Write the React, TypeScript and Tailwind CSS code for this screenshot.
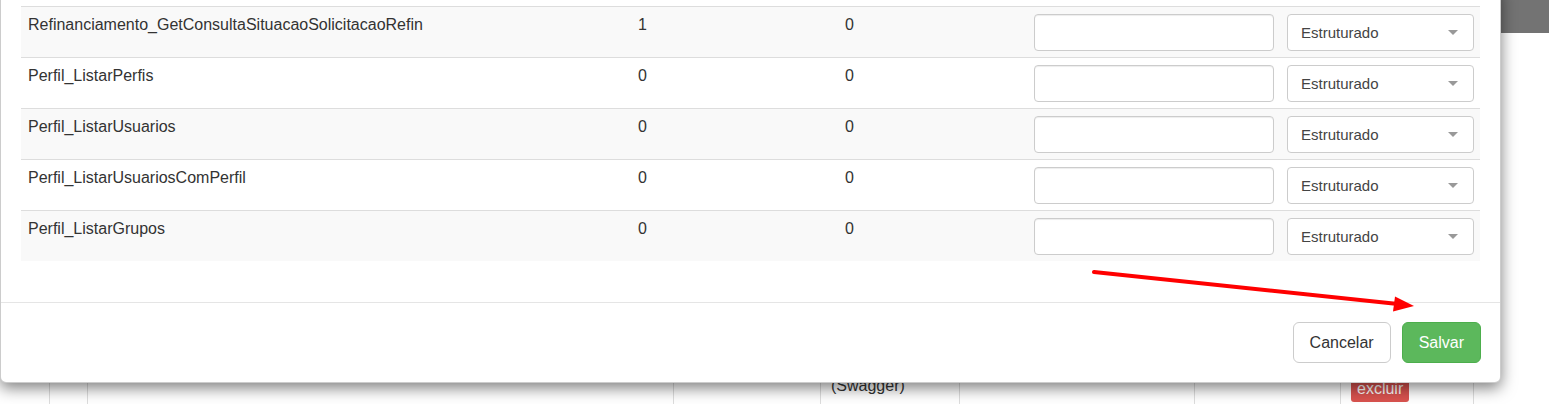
import React from "react";

const rows = [
  { name: "Refinanciamento_GetConsultaSituacaoSolicitacaoRefin", a: "1", b: "0" },
  { name: "Perfil_ListarPerfis", a: "0", b: "0" },
  { name: "Perfil_ListarUsuarios", a: "0", b: "0" },
  { name: "Perfil_ListarUsuariosComPerfil", a: "0", b: "0" },
  { name: "Perfil_ListarGrupos", a: "0", b: "0" },
];

export default function App() {
  return (
    <div
      className="relative h-[404px] w-[1549px] overflow-hidden bg-white text-[#333333]"
      style={{ fontFamily: '"Liberation Sans", Arial, sans-serif' }}
    >
      {/* page behind the modal */}
      <div className="h-[33px] w-full bg-[#737373]" />
      <div className="mt-[307px] flex h-[64px] pl-[49px]">
        <div className="w-[38px] border-l border-[#dddddd]" />
        <div className="w-[586px] border-l border-[#dddddd]" />
        <div className="w-[147px] border-l border-[#dddddd]" />
        <div className="w-[139px] border-l border-[#dddddd] pl-[10px] pt-[37px] text-[16px] leading-[18px] text-[#333333]">
          (Swagger)
        </div>
        <div className="w-[235px] border-l border-[#dddddd]" />
        <div className="w-[146px] border-l border-[#dddddd]" />
        <div className="w-[133px] border-l border-[#dddddd] pl-[10px] pt-[36px]">
          <span className="inline-block rounded-[3px] bg-[#d9534f] px-[6px] py-[3px] text-[16px] leading-[20px] text-white">
            excluir
          </span>
        </div>
        <div className="flex-1 border-l border-[#dddddd]" />
      </div>

      {/* modal */}
      <div className="absolute left-0 top-[-14px] w-[1501px] rounded-[6px] border border-black/20 bg-white shadow-[0_5px_15px_rgba(0,0,0,0.5)]">
        <div className="px-[20px] pt-[19px] pb-[21px]">
          <div className="mb-[20px] w-full">
            {rows.map((r, i) => (
              <div
                key={r.name}
                className={`flex h-[51px] border-t border-[#dddddd] text-[16px] leading-[20px] ${
                  i % 2 === 0 ? "bg-[#f9f9f9]" : "bg-white"
                }`}
              >
                <div className="w-[609px] px-[7px] pt-[8px]">{r.name}</div>
                <div className="w-[207px] px-[8px] pt-[8px]">{r.a}</div>
                <div className="w-[189px] px-[8px] pt-[8px]">{r.b}</div>
                <div className="w-[261px] pl-[8px] pt-[7px]">
                  <div className="h-[37px] w-[240px] rounded-[4px] border border-[#cccccc] bg-white shadow-[inset_0_1px_1px_rgba(0,0,0,0.075)]" />
                </div>
                <div className="flex-1 pt-[7px]">
                  <div className="flex h-[37px] w-[187px] items-center justify-between rounded-[4px] border border-[#cccccc] bg-white pl-[13px] pr-[15px] text-[15px] text-[#444444]">
                    <span>Estruturado</span>
                    <span className="h-0 w-0 border-x-[5px] border-t-[5px] border-x-transparent border-t-[#999999]" />
                  </div>
                </div>
              </div>
            ))}
          </div>
        </div>
        <div className="flex justify-end gap-[11px] border-t border-[#e5e5e5] px-[19px] pt-[19px] pb-[19px]">
          <button className="h-[41px] rounded-[6px] border border-[#cccccc] bg-white px-[16px] text-[16px] text-[#333333]">
            Cancelar
          </button>
          <button className="h-[41px] rounded-[6px] border border-[#4cae4c] bg-[#5cb85c] px-[16px] text-[16px] text-white">
            Salvar
          </button>
        </div>
      </div>

      {/* red annotation arrow */}
      <svg className="pointer-events-none absolute left-0 top-0" width="1549" height="404">
        <line x1="1094" y1="272" x2="1398" y2="304" stroke="#ff0000" strokeWidth="4" strokeLinecap="round" />
        <polygon points="1414,306 1393,311.5 1395,296.5" fill="#ff0000" />
      </svg>
    </div>
  );
}
